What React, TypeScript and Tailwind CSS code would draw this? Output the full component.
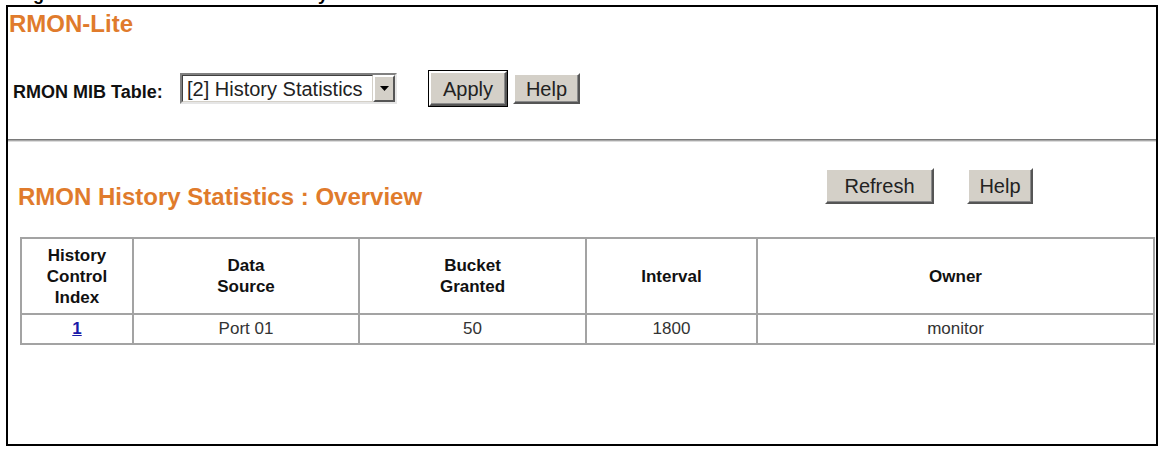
import React from 'react';

const orange = 'text-[#e07b2c]';

function Bevel({ label, className = '' }: { label: string; className?: string }) {
  return (
    <button
      className={`flex items-center justify-center bg-[#d4d0c8] border-2 border-t-white border-l-white border-r-[#555] border-b-[#555] shadow-[inset_-1px_-1px_0_#8a8a8a] text-[20px] leading-none text-[#222] ${className}`}
    >
      {label}
    </button>
  );
}

function MibSelect() {
  return (
    <div className="flex h-[31px] w-[217px] border-2 border-t-[#808080] border-l-[#808080] border-r-[#e6e6e6] border-b-[#e6e6e6] bg-white">
      <div className="flex flex-1 items-center border border-t-[#404040] border-l-[#404040] border-r-[#d4d0c8] border-b-[#d4d0c8] pl-[4px] text-[20px] leading-none text-[#222]">
        [2] History Statistics
      </div>
      <div className="flex w-[22px] items-center justify-center bg-[#d4d0c8] border-2 border-t-white border-l-white border-r-[#555] border-b-[#555]">
        <svg width="9" height="5" viewBox="0 0 9 5">
          <path d="M0 0h9L4.5 5z" fill="#000" />
        </svg>
      </div>
    </div>
  );
}

const headers = [
  { label: ['History', 'Control', 'Index'], w: 'w-[112px]' },
  { label: ['Data', 'Source'], w: 'w-[226px]' },
  { label: ['Bucket', 'Granted'], w: 'w-[227px]' },
  { label: ['Interval'], w: 'w-[171px]' },
  { label: ['Owner'], w: 'w-[397px]' },
];

export default function App() {
  return (
    <div className="w-[1162px] h-[451px] overflow-hidden bg-white font-['Liberation_Sans',Arial,sans-serif]">
      {/* caption line from the page above, mostly cut off */}
      <div className="h-[5px] overflow-hidden">
        <div className="-mt-[16px] flex pl-[17px] text-[18px] font-bold leading-[20px] text-black">
          <span className="w-[183px]">Figure 111</span>
          <span>RMON: History Statistics</span>
        </div>
      </div>

      <div className="ml-[6px] flex h-[441px] w-[1152px] flex-col border-2 border-black">
        {/* RMON-Lite section */}
        <div className="h-[132px] shrink-0">
          <h1 className={`mt-[3px] pl-[1px] text-[24px] font-bold leading-[28px] ${orange}`}>RMON-Lite</h1>
          <div className="mt-[32px] flex h-[37px] items-center pl-[5px]">
            <span className="w-[167px] pt-[7px] text-[18px] font-bold text-[#111]">RMON MIB Table:</span>
            <MibSelect />
            <div className="ml-[31px] border border-black">
              <Bevel label="Apply" className="h-[35px] w-[78px]" />
            </div>
            <Bevel label="Help" className="ml-[5px] h-[31px] w-[67px]" />
          </div>
        </div>

        {/* groove separator */}
        <div className="h-[3px] shrink-0 border-t border-t-[#7a7a7a] border-b border-b-[#dcdcdc] bg-[#a8a8a8]" />

        {/* overview section */}
        <div className="flex-1">
          <div className="mt-[26px] flex h-[36px] items-start pl-[10px]">
            <h2 className={`mt-[15px] text-[24px] font-bold leading-[28px] ${orange}`}>
              RMON History Statistics : Overview
            </h2>
            <div className="ml-auto mr-[123px] flex gap-[33px]">
              <Bevel label="Refresh" className="h-[36px] w-[109px]" />
              <Bevel label="Help" className="h-[36px] w-[66px]" />
            </div>
          </div>

          <table className="ml-[12px] mt-[33px] w-[1133px] table-fixed border-collapse border-2 border-[#a3a3a3]">
            <thead>
              <tr className="h-[76px]">
                {headers.map((h) => (
                  <th
                    key={h.label.join()}
                    className={`${h.w} border-2 border-[#a3a3a3] text-center align-middle text-[17px] font-bold leading-[21px] text-[#111]`}
                  >
                    {h.label.map((l) => (
                      <div key={l}>{l}</div>
                    ))}
                  </th>
                ))}
              </tr>
            </thead>
            <tbody>
              <tr className="h-[30px] text-center text-[17px] leading-[22px] text-[#333]">
                <td className="border-2 border-[#a3a3a3]">
                  <a className="font-bold text-[#1a1aa8] underline">1</a>
                </td>
                <td className="border-2 border-[#a3a3a3]">Port 01</td>
                <td className="border-2 border-[#a3a3a3]">50</td>
                <td className="border-2 border-[#a3a3a3]">1800</td>
                <td className="border-2 border-[#a3a3a3]">monitor</td>
              </tr>
            </tbody>
          </table>
        </div>
      </div>
    </div>
  );
}
